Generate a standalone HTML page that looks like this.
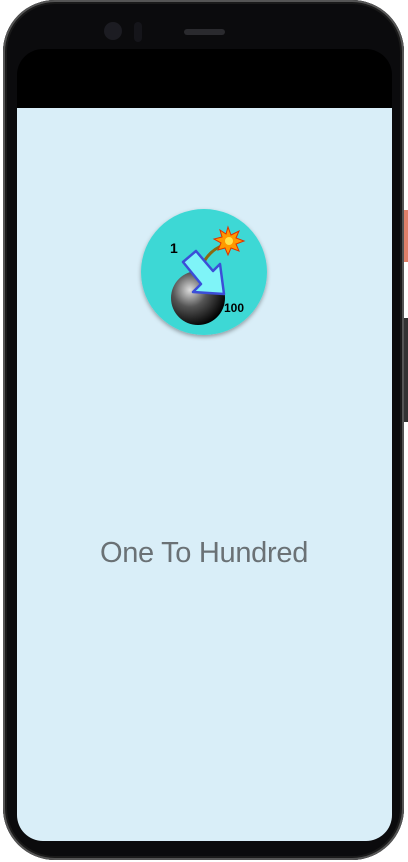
<!DOCTYPE html>
<html><head><meta charset="utf-8"><style>
html,body{margin:0;padding:0;width:408px;height:862px;overflow:hidden;background:#fff;}
.phone{position:absolute;left:3px;top:0;width:401px;height:860px;border-radius:52px;background:#0b0b0d;box-shadow:inset 0 0 0 2px #555,inset 0 0 0 4px #1a1a1a;}
.side1{position:absolute;left:403px;top:210px;width:5px;height:52px;background:#e0806a;}
.side2{position:absolute;left:403px;top:318px;width:5px;height:104px;background:#333;}
.bar{position:absolute;left:17px;top:49px;width:375px;height:60px;background:#000;border-radius:26px 26px 0 0;}
.screen{position:absolute;left:17px;top:108px;width:375px;height:733px;background:#d9eef8;border-radius:0 0 26px 26px;}
.title{position:absolute;left:0;width:408px;top:537px;text-align:center;font-family:"Liberation Sans",sans-serif;font-size:29px;color:#6a7175;font-weight:300;letter-spacing:-0.3px;}
.cam{position:absolute;left:104px;top:22px;width:18px;height:18px;border-radius:50%;background:#1c1c22;}
.cam2{position:absolute;left:134px;top:22px;width:8px;height:20px;border-radius:4px;background:#15151a;}
.spk{position:absolute;left:184px;top:29px;width:41px;height:6px;border-radius:3px;background:#2a2a2e;}
</style></head><body>
<div class="side1"></div><div class="side2"></div>
<div class="phone"></div>
<div class="cam"></div><div class="cam2"></div><div class="spk"></div>
<div class="bar"></div>
<div class="screen"></div>
<svg style="position:absolute;left:136px;top:205px" width="140" height="140" viewBox="0 0 140 140">
<defs>
<radialGradient id="b" cx="0.35" cy="0.35" r="0.7"><stop offset="0" stop-color="#ddd"/><stop offset="0.45" stop-color="#555"/><stop offset="1" stop-color="#000"/></radialGradient>
<filter id="s"><feDropShadow dx="0" dy="2" stdDeviation="2" flood-opacity="0.35"/></filter>
</defs>
<circle cx="68" cy="67" r="63" fill="#3ed8d5" filter="url(#s)"/>
<circle cx="62" cy="93" r="27" fill="url(#b)"/>
<path d="M63 68 Q70 46 88 40" stroke="#8a6a10" stroke-width="3" fill="none"/>
<polygon points="92,22 95,30 103,26 100,33 108,36 100,39 103,46 95,43 92,50 89,43 82,45 85,38 78,34 86,32 84,25 90,29" fill="#ff9a00" stroke="#e03000" stroke-width="1"/>
<circle cx="93" cy="36" r="4" fill="#ffe24a"/>
<polygon points="47,57 60,46 77,66 84,59 88,89 57,87 65,79" fill="#7ff4f8" stroke="#3b4ed8" stroke-width="2.5" stroke-linejoin="round"/>
<text x="34" y="48" font-family="Liberation Sans,sans-serif" font-weight="bold" font-size="14" fill="#000">1</text>
<text x="88" y="107" font-family="Liberation Sans,sans-serif" font-weight="bold" font-size="12" fill="#000">100</text>
</svg>
<div class="title">One To Hundred</div>
</body></html>
